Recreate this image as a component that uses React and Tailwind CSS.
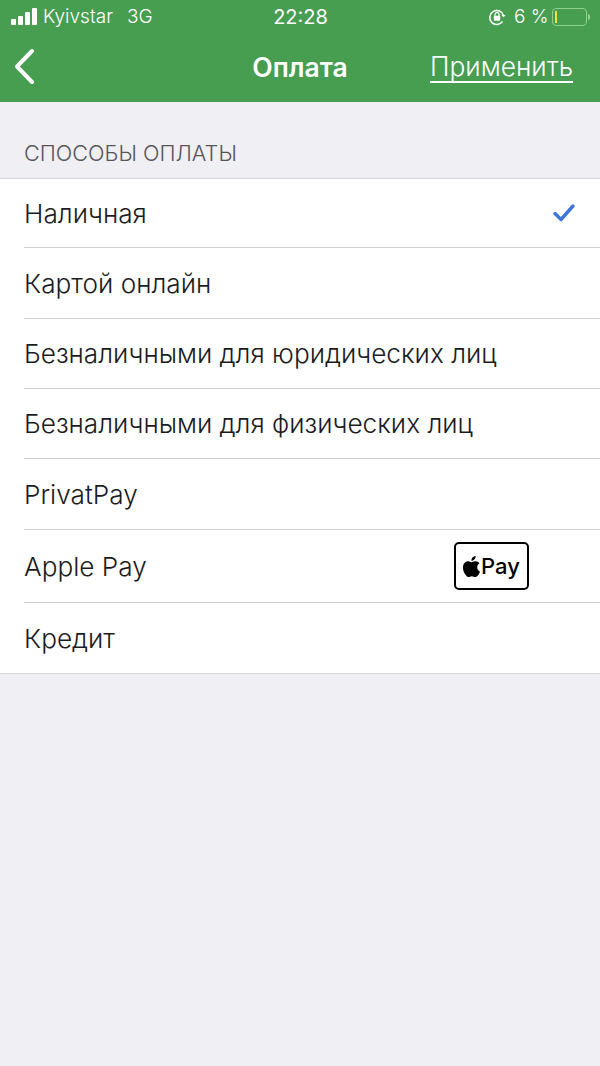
import React from 'react';

const METHODS = [
  { name: 'Наличная', height: 'h-[69px]', selected: true },
  { name: 'Картой онлайн', height: 'h-[71px]' },
  { name: 'Безналичными для юридических лиц', height: 'h-[70px]' },
  { name: 'Безналичными для физических лиц', height: 'h-[70px]' },
  { name: 'PrivatPay', height: 'h-[71px]' },
  { name: 'Apple Pay', height: 'h-[73px]', applePay: true },
  { name: 'Кредит', height: 'h-[70px]', last: true },
];

const SignalBars = () => (
  <svg width="27" height="17" viewBox="0 0 27 17" fill="white">
    <rect x="0" y="11" width="5" height="6" rx="1" />
    <rect x="7" y="8" width="5" height="9" rx="1" />
    <rect x="14" y="4" width="5" height="13" rx="1" />
    <rect x="21" y="0" width="5" height="17" rx="1" />
  </svg>
);

const RotationLock = () => (
  <svg width="18" height="18" viewBox="0 0 18 18" fill="none" stroke="white">
    <path d="M15.5 7.5A7 7 0 1 0 14.5 13.5" strokeWidth="1.5" />
    <path d="M13.5 7h4l-2 2.6z" fill="white" stroke="none" />
    <rect x="5.8" y="7.8" width="6.4" height="5" rx="0.8" fill="white" stroke="none" />
    <path d="M7 8V6.6a2 2 0 0 1 4 0V8" strokeWidth="1.2" />
  </svg>
);

const Battery = () => (
  <div className="flex items-center">
    <div className="w-[35px] h-[18px] rounded-[4px] border border-[#8fd08f] p-[2px]">
      <div className="w-[2px] h-full bg-[#f2e23a]"></div>
    </div>
    <div className="w-[1.5px] h-[6px] bg-[#8fd08f] ml-[1px] rounded-r-sm"></div>
  </div>
);

const AppleGlyph = () => (
  <svg width="17" height="21" viewBox="0 0 814 1000" fill="black" preserveAspectRatio="none">
    <path d="M788 341c-6 4-108 62-108 190 0 148 130 200 134 202-1 3-21 72-69 142-43 62-88 123-156 123s-86-39-164-39c-76 0-103 41-165 41s-106-57-156-127C46 791 0 666 0 547 0 356 124 255 246 255c65 0 119 43 160 43 39 0 100-45 174-45 28 0 130 2 208 88zM554 159c31-36 52-87 52-137 0-7-1-14-2-20-50 2-110 33-146 75-28 32-55 83-55 135 0 8 1 15 2 18 3 1 9 2 14 2 45 0 102-30 135-73z" />
  </svg>
);

const App = () => {
  return (
    <div className="w-[600px] h-[1066px] bg-[#efeff4] font-['Inter',sans-serif] overflow-hidden">
      {/* Green header */}
      <div className="h-[102px] bg-[#479d50] text-white">
        <div className="h-[33px] pl-[11px] pr-[10px] flex items-center justify-between text-[19px] leading-none">
          <div className="w-[200px] flex items-center gap-[5px]">
            <SignalBars />
            <span className="font-light">Kyivstar</span>
            <span className="font-light ml-[9px]">3G</span>
          </div>
          <span className="font-normal text-[20px]">22:28</span>
          <div className="w-[200px] flex items-center justify-end gap-[4px]">
            <RotationLock />
            <span className="font-light ml-[4px]">6 %</span>
            <Battery />
          </div>
        </div>
        <div className="h-[69px] px-[27px] grid grid-cols-[1fr_auto_1fr] items-center">
          <svg width="26" height="38" viewBox="0 0 26 38" fill="none" stroke="white" strokeWidth="4" strokeLinecap="round" strokeLinejoin="round" className="mb-[1px] -ml-[15px]">
            <path d="M20 3L5 18.5L20 34" />
          </svg>
          <span className="text-[26.5px] font-semibold text-center leading-none">Оплата</span>
          <span className="text-[26.3px] font-light text-right leading-none underline underline-offset-[5px] decoration-[1.5px]">Применить</span>
        </div>
      </div>

      {/* Section label */}
      <div className="h-[76px] pl-[24px] pb-[8px] flex items-end">
        <span className="text-[21.7px] font-light text-[#55555a]">СПОСОБЫ ОПЛАТЫ</span>
      </div>

      {/* Payment methods */}
      <div className="bg-white border-y border-[#d9d9dc]">
        {METHODS.map((m) => (
          <div key={m.name} className="pl-[24px]">
            <div className={`${m.height} pr-[24px] flex items-center justify-between ${m.last ? '' : 'border-b border-[#d0d0d3]'}`}>
              <span className="text-[26.2px] font-light text-[#1c1c1e] pt-[1px]">{m.name}</span>
              {m.selected && (
                <svg width="24" height="20" viewBox="0 0 24 20" fill="none" stroke="#3f74d8" strokeWidth="3.4" strokeLinecap="round" strokeLinejoin="round">
                  <path d="M3 10.5l6 6L21 3" />
                </svg>
              )}
              {m.applePay && (
                <div className="w-[75px] h-[48px] mr-[47px] border-2 border-black rounded-[5px] flex items-center justify-center gap-[1px]">
                  <AppleGlyph />
                  <span className="text-[22px] font-medium text-black leading-none">Pay</span>
                </div>
              )}
            </div>
          </div>
        ))}
      </div>
    </div>
  );
};

export default App;
